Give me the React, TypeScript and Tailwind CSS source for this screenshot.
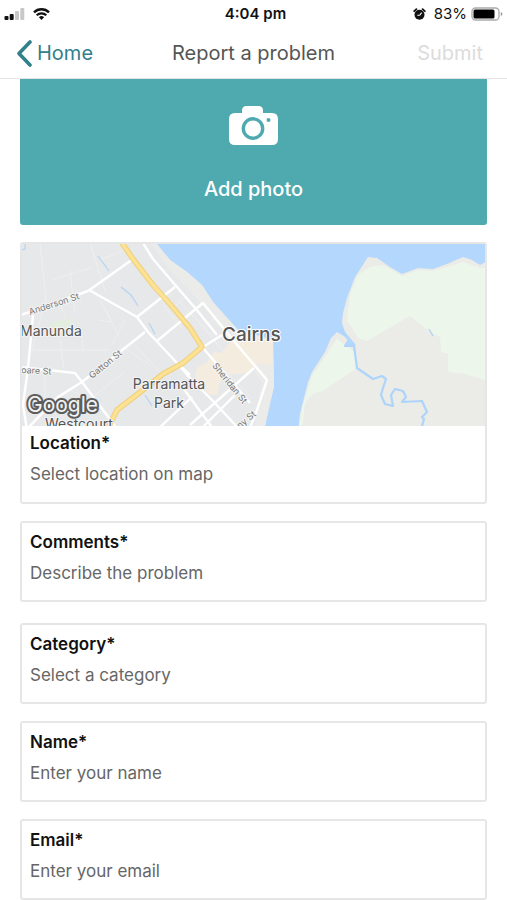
import type { ReactNode } from "react";

const CARD = "rounded-[3px] border-2 border-[#e6e6e6] bg-white";
const CONTROL =
  "block h-6 w-full appearance-none resize-none overflow-hidden border-0 bg-transparent p-0 text-[17px] leading-6 text-[#666] placeholder:text-[#666] placeholder:opacity-100 outline-none";

function Field({ id, label, children }: { id: string; label: string; children: ReactNode }) {
  return (
    <div className="px-2 pt-[7px] pb-[15px]">
      <label htmlFor={id} className="mb-[7px] block text-[17px] leading-6 font-semibold text-[#111]">
        {label}
      </label>
      {children}
    </div>
  );
}

function StatusBar() {
  return (
    <div className="grid h-7 grid-cols-[1fr_auto_1fr] items-center pr-1 pl-1 text-[#111]">
      <div className="flex items-center gap-2">
        <svg width="21" height="12" viewBox="0 0 21 12" role="img" aria-label="Signal strength">
          <rect x="0.500" y="8" width="4" height="4" rx="1" fill="#111" />
          <rect x="5.700" y="6" width="4" height="6" rx="1" fill="#111" />
          <rect x="11" y="3" width="4" height="9" rx="1" fill="#c8c8c8" />
          <rect x="16.300" y="0" width="4" height="12" rx="1" fill="#c8c8c8" />
        </svg>
        <svg width="17" height="12" viewBox="0 0 17 12" role="img" aria-label="Wi-Fi">
          <path d="M1 4.400a10.600 10.600 0 0 1 15 0" fill="none" stroke="#111" strokeWidth="2.400" />
          <path d="M3.700 7.300a6.800 6.800 0 0 1 9.600 0" fill="none" stroke="#111" strokeWidth="2.200" />
          <path d="M5.900 9.200a3.700 3.700 0 0 1 5.200 0L8.500 11.900z" fill="#111" />
        </svg>
      </div>
      <span className="pl-1 text-center text-[15px] leading-5 font-semibold">4:04 pm</span>
      <div className="flex items-center justify-end gap-1">
        <svg width="13" height="13" viewBox="0 0 13 13" className="mr-1" role="img" aria-label="Alarm">
          <circle cx="6.500" cy="6.800" r="5" fill="#111" />
          <path d="M1.200 3.200 3.400 1.200M11.800 3.200 9.600 1.200" stroke="#111" strokeWidth="1.800" strokeLinecap="round" />
          <path d="M6.700 7.200 8.600 4.600M6.700 7.200H4.300" stroke="#fff" strokeWidth="1.100" />
        </svg>
        <span className="text-[15px] leading-5">83%</span>
        <svg width="32" height="14" viewBox="0 0 32 14" role="img" aria-label="Battery">
          <rect x="1" y="1" width="27" height="12" rx="3.500" fill="#fff" stroke="#aaa" strokeWidth="1.300" />
          <rect x="2.500" y="2.500" width="21" height="9" rx="1.500" fill="#000" />
          <path d="M29.800 5v4q1.600-.5 1.600-2t-1.600-2z" fill="#999" />
        </svg>
      </div>
    </div>
  );
}

function CameraIcon() {
  return (
    <svg width="50" height="40" viewBox="0 0 50 40" aria-hidden="true">
      <path
        d="M6 7h7V4.500Q13 0 17.500 0h12Q34 0 34 4.500V7h9q6 0 6 6v20q0 6-6 6H6q-6 0-6-6V13q0-6 6-6z"
        fill="#fff"
      />
      <circle cx="24" cy="22.500" r="9.700" fill="none" stroke="#4faab0" strokeWidth="3.400" />
      <circle cx="39.500" cy="14" r="2" fill="#4faab0" />
    </svg>
  );
}

function CairnsMap() {
  return (
    <svg
      className="block h-[182px] w-full font-['Inter','Liberation_Sans',sans-serif]"
      viewBox="22 244 463 182"
      preserveAspectRatio="xMidYMid slice"
      role="img"
      aria-label="Map of Cairns"
    >
      <rect x="0" y="230" width="520" height="210" fill="#b3d7fd" />
      <path d="M0 230H148L156 243 170 260 187 272 202 285 213 302 238 330 273 340 274 386 265 426 262 440H0z" fill="#e7e8e9" />
      <path d="M148 240 156 243 170 260 187 272 202 285 213 302 238 330 273 340 274 386 265 426H255L262 382 234 345 200 302 168 267z" fill="#ebebea" />
      <path d="M197 368 207 362 214 352 221 353 232 340 273 341 272 366 259 363 247 373 222 375 217 395 207 394 203 382 195 378z" fill="#f4eddf" />
      <path d="M50 324 65 318 77 323 73 327 51 328z" fill="#e3ede0" />
      <g fill="none" stroke="#efefef" strokeWidth="1">
        <path d="M40 243 46 300 32 350M70 270 75 312M52 280 91 268M58 300 65 315M105 308 112 322 98 320M100 300 120 338M125 320 112 345M82 330 83 350 30 350M83 350 110 350M60 340 64 368M120 345 150 365M130 340 160 372M95 395 125 372M100 405 70 390M170 310 190 294M163 305 182 328M178 300 212 336M205 326 222 312M196 318 222 350M210 355 252 398M45 375V405M90 243 105 290M100 260 125 250" />
      </g>
      <g fill="none" stroke="#b4d3f3" strokeWidth="1.200">
        <path d="M98 256 109 271M121 287 131 295 138 306M149 323 155 334M145 395 152 406M22 249q4 3 3-6" />
      </g>
      <g fill="none" stroke="#fff" strokeWidth="2.400" strokeLinejoin="round">
        <path d="M20 315 30 312 88 291 133 259M89 290 137 317 148 332 177 363 190 378 212 400 240 430" />
        <path d="M143 243 153 259 177 287 196 309 217 335M137 317 175 287M157 341 203 303 233 340 267 380 257 410 250 428" />
        <path d="M203 347 222 335M203 348 250 403M145 332 82 382 58 397 26 430M20 367 75 373 82 382 118 430M33 315 28 368 23 405 27 430" />
        <path d="M254 368 190 425M183 388 214 430M177 363 190 375M157 430 192 397M240 390 200 430" />
      </g>
      <path d="M120 240 133 259 153 285 170 304 190 328 202 347 183 363 163 374 143 390 117 410 108 428" fill="none" stroke="#efcf7b" strokeWidth="5.500" strokeLinejoin="round" />
      <path d="M120 240 133 259 153 285 170 304 190 328 202 347 183 363 163 374 143 390 117 410 108 428" fill="none" stroke="#fde293" strokeWidth="3.500" strokeLinejoin="round" />
      <path d="M297 440 300 414 308 382 312 372 325 352 331 338 337 332 347 338 342 323 343 313 347 298 355 277 368 257 377 258 390 267 402 274 418 268 433 269 447 264 463 257 472 260 480 265 487 261 520 258V440z" fill="#ebebe8" />
      <path d="M347 320 350 295 358 275 370 267 383 265 402 276 418 270 433 271 447 267 463 262 480 268 520 264V392L487 381 465 374 448 372V354L441 352 440 337 431 333 410 316 367 341 358 338z" fill="#ecf6eb" />
      <path d="M297 440 303 404 312 376 328 352 337 339 348 347 355 352 357 368 323 391 313 394z" fill="#ecf6eb" />
      <path d="M312 395 324 391 357 368 380 400 370 440H301L305 404z" fill="#ebebe8" />
      <path d="M341 329 349 340 345 346 354 346 357 368 373 379 382 376 386 379 383 388 381 395 385 404 393 406 391 395 395 389 403 391 406 397 402 402 422 401 427 412 422 417 424 419 421 430" fill="none" stroke="#add4fa" strokeWidth="2.200" strokeLinejoin="round" />
      <path d="M340 326 356 345 345 346 348 340z" fill="#b3d7fd" />
      <path d="M429 329 433 336" stroke="#b5d3ee" strokeWidth="1.500" />
      <g fill="#555" stroke="#f4f4f4" strokeWidth="2" strokeLinejoin="round" paintOrder="stroke">
        <text x="222" y="341" fontSize="19" fontWeight="500" stroke="#fff">Cairns</text>
        <text x="20" y="336" fontSize="14">Manunda</text>
        <text x="169" y="389" fontSize="14" textAnchor="middle">Parramatta</text>
        <text x="169" y="408" fontSize="14" textAnchor="middle">Park</text>
        <text x="45" y="429" fontSize="14">Westcourt</text>
        <g fill="#777" fontSize="9">
          <text transform="translate(30 315) rotate(-18)">Anderson St</text>
          <text transform="translate(92 379) rotate(-39)">Gatton St</text>
          <text transform="translate(21 373) rotate(3)">oare St</text>
          <text transform="translate(212 366) rotate(51)">Sheridan St</text>
          <text transform="translate(240 429) rotate(-40)">ny St</text>
        </g>
      </g>
      <text x="27" y="412" fontSize="21" fontWeight="400" fill="#f2f2f2" stroke="#5c5c5c" strokeWidth="4" strokeLinejoin="round" paintOrder="stroke">Google</text>
    </svg>
  );
}

export default function App() {
  return (
    <main className="min-h-screen bg-white font-['Inter','Liberation_Sans',sans-serif]">
      <header className="border-b border-[#e4e4e4]">
        <StatusBar />
        <nav className="grid h-[50px] grid-cols-[1fr_auto_1fr] items-center px-4 text-xl">
          <a href="#home" className="flex items-center gap-1 text-[#32808a]">
            <svg width="17" height="27" viewBox="0 0 17 27" aria-hidden="true">
              <path d="M14 2 3 13.500 14 25" fill="none" stroke="#32808a" strokeWidth="3.600" strokeLinecap="round" strokeLinejoin="round" />
            </svg>
            Home
          </a>
          <h1 className="text-[#555]">Report a problem</h1>
          <button type="submit" form="report" className="justify-self-end pr-2 text-[#dcdcdc]">
            Submit
          </button>
        </nav>
      </header>

      <form id="report" className="flex flex-col gap-[17px] px-5">
        <button
          type="button"
          className="flex h-[146px] w-full flex-col items-center gap-[29px] rounded-b-[3px] bg-[#4faab0] pt-[27px] text-xl font-medium text-white"
        >
          <CameraIcon />
          Add photo
        </button>

        <section className={`${CARD} pb-px`}>
          <CairnsMap />
          <div className="-mt-0.5">
            <Field id="location" label="Location*">
              <input id="location" type="text" placeholder="Select location on map" className={CONTROL} />
            </Field>
          </div>
        </section>

        <div className={`${CARD} mb-1`}>
          <Field id="comments" label="Comments*">
            <textarea id="comments" rows={1} placeholder="Describe the problem" className={CONTROL} />
          </Field>
        </div>

        <div className={CARD}>
          <Field id="category" label="Category*">
            <select id="category" className={CONTROL}>
              <option>Select a category</option>
            </select>
          </Field>
        </div>

        <div className={CARD}>
          <Field id="name" label="Name*">
            <input id="name" type="text" placeholder="Enter your name" className={CONTROL} />
          </Field>
        </div>

        <div className={CARD}>
          <Field id="email" label="Email*">
            <input id="email" type="email" placeholder="Enter your email" className={CONTROL} />
          </Field>
        </div>
      </form>
    </main>
  );
}
